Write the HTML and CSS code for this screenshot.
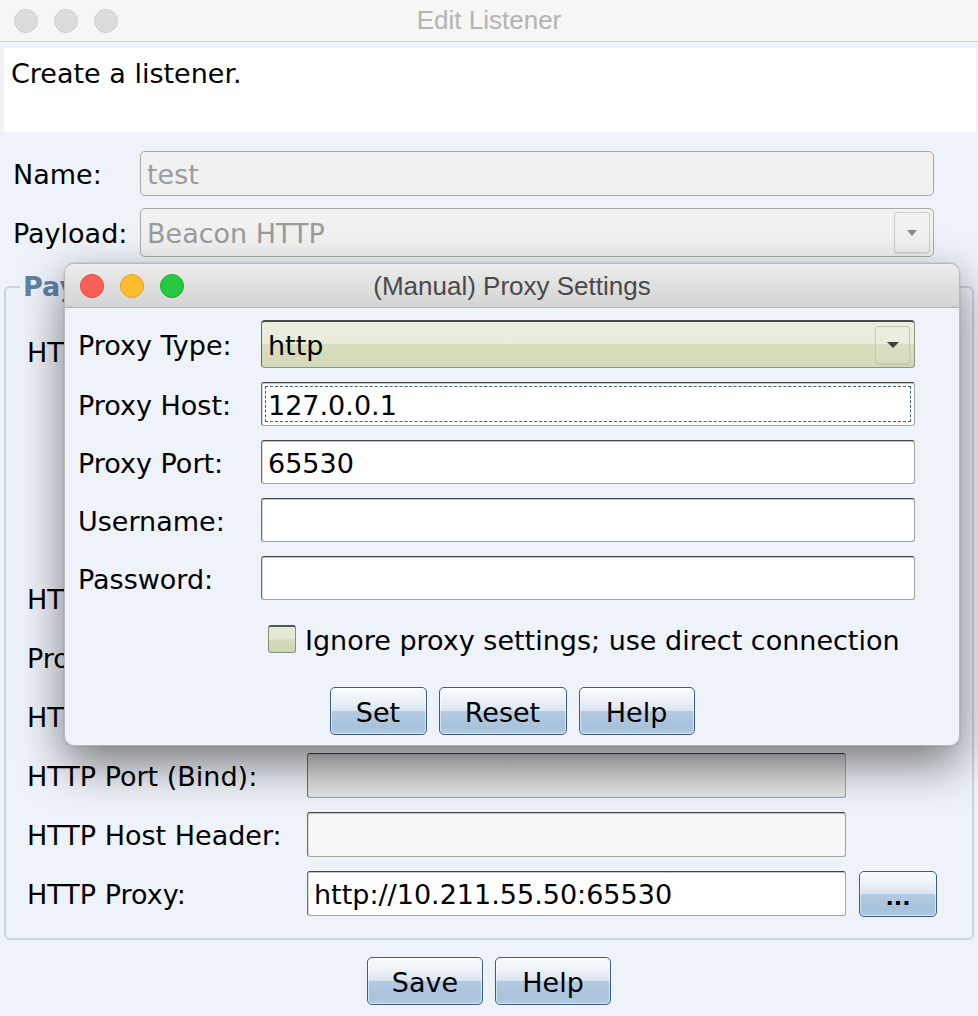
FILE: index.html
```html
<!DOCTYPE html>
<html>
<head>
<meta charset="utf-8">
<title>Edit Listener</title>
<link rel="stylesheet" href="styles.css">
</head>
<body>
<div class="window">
  <div class="titlebar">
    <div class="lights">
      <span class="light off"></span><span class="light off"></span><span class="light off"></span>
    </div>
    <div class="wtitle">Edit Listener</div>
    <div></div>
  </div>

  <div class="desc">Create a listener.</div>

  <div class="form">
    <div class="lbl">Name:</div>
    <div class="field disabled">test</div>
    <div class="lbl">Payload:</div>
    <div class="combo disabled"><span class="val">Beacon HTTP</span><span class="arrow"><span class="tri"></span></span></div>
  </div>

  <div class="group">
    <div class="group-title">Payload Options</div>
    <div class="grid">
      <div class="glbl top">HTTP Hosts:</div>
      <div class="hosts"></div>
      <div></div>
      <div class="glbl">HTTP Host (Stager):</div>
      <div class="field"></div>
      <div></div>
      <div class="glbl">Profile:</div>
      <div class="field"></div>
      <div></div>
      <div class="glbl">HTTP Port (C2):</div>
      <div class="field"></div>
      <div></div>
      <div class="glbl">HTTP Port (Bind):</div>
      <div class="field grey"></div>
      <div></div>
      <div class="glbl">HTTP Host Header:</div>
      <div class="field soft"></div>
      <div></div>
      <div class="glbl">HTTP Proxy:</div>
      <div class="field">http://10.211.55.50:65530</div>
      <button class="btn dots">...</button>
    </div>
  </div>

  <div class="actions">
    <button class="btn">Save</button>
    <button class="btn">Help</button>
  </div>

  <div class="dialog">
    <div class="dtitlebar">
      <div class="lights">
        <span class="light red"></span><span class="light yellow"></span><span class="light green"></span>
      </div>
      <div class="dtitle">(Manual) Proxy Settings</div>
      <div></div>
    </div>
    <div class="dbody">
      <div class="dgrid">
        <div class="dlbl">Proxy Type:</div>
        <div class="combo type"><span class="val">http</span><span class="arrow"><span class="tri"></span></span></div>
        <div class="dlbl">Proxy Host:</div>
        <div class="field focus">127.0.0.1</div>
        <div class="dlbl">Proxy Port:</div>
        <div class="field">65530</div>
        <div class="dlbl">Username:</div>
        <div class="field"></div>
        <div class="dlbl">Password:</div>
        <div class="field"></div>
        <div class="check-row">
          <span class="checkbox"></span>
          <span>Ignore proxy settings; use direct connection</span>
        </div>
      </div>
      <div class="dactions">
        <button class="btn set">Set</button>
        <button class="btn reset">Reset</button>
        <button class="btn help">Help</button>
      </div>
    </div>
  </div>
</div>
</body>
</html>
```

FILE: styles.css
```css
* { box-sizing: border-box; }

html, body {
  margin: 0;
  padding: 0;
  background: #eef2f9;
}

body {
  font-family: "DejaVu Sans", "Noto Sans", sans-serif;
  font-size: 27px;
  color: #000;
}

.window {
  position: relative;
  width: 978px;
  height: 1016px;
  overflow: hidden;
  background: #eef2f9;
}

/* ---------- title bar ---------- */
.titlebar {
  height: 42px;
  display: grid;
  grid-template-columns: 1fr auto 1fr;
  align-items: center;
  background: #f6f6f6;
  border-bottom: 1px solid #d3d3d3;
}

.lights {
  display: flex;
  gap: 16px;
  padding-left: 14px;
}

.light {
  width: 24px;
  height: 24px;
  border-radius: 50%;
  display: block;
}

.light.off { background: #dcdcdc; border: 1px solid #cfcfcf; }
.light.red { background: #fe5f57; border: 1px solid #e2463f; }
.light.yellow { background: #febc2e; border: 1px solid #dea123; }
.light.green { background: #28c840; border: 1px solid #1aab29; }

.wtitle {
  font-family: "Liberation Sans", Arial, sans-serif;
  font-size: 26px;
  color: #b3b3b3;
}

/* ---------- description ---------- */
.desc {
  margin: 6px 2px 0 4px;
  height: 84px;
  background: #fff;
  padding: 10px 7px 0;
  line-height: 32px;
}

/* ---------- top form ---------- */
.form {
  margin: 19px 44px 0 13px;
  display: grid;
  grid-template-columns: 127px 1fr;
  grid-template-rows: 45px 49px;
  row-gap: 12px;
  align-items: center;
}

.lbl, .glbl, .dlbl { white-space: nowrap; padding-top: 2px; }

.field {
  height: 45px;
  display: flex;
  align-items: center;
  padding: 2px 6px 0;
  background: #fff;
  border: 1px solid #a3a3a3;
  border-top-color: #444;
  border-left-color: #6e6e6e;
  border-radius: 3px;
  box-shadow: inset 0 1px 0 #c4c4c4, inset 1px 0 0 #dadada;
  white-space: nowrap;
}

.field.disabled {
  background: #f1f1f1;
  color: #9b9b9b;
  border: 1px solid #a9a9a9;
  border-radius: 5px;
  box-shadow: none;
}

.field.grey {
  background: linear-gradient(#d6d6d6, #e6e6e6);
}

.field.soft {
  background: #f7f7f7;
}

.field.focus {
  outline: 1.5px dashed #3d6182;
  outline-offset: -5px;
}

.combo {
  height: 49px;
  display: flex;
  align-items: center;
  justify-content: space-between;
  padding: 0 3px 0 6px;
  border-radius: 5px;
}

.combo .val { padding-top: 2px; }

.combo.disabled {
  background: #f1f1f1;
  color: #9b9b9b;
  border: 1px solid #a9a9a9;
}

.combo .arrow {
  width: 36px;
  height: 41px;
  display: flex;
  align-items: center;
  justify-content: center;
  border: 1px solid #cdcdcd;
  border-radius: 3px;
  box-shadow: 0 1px 1px rgba(0,0,0,0.08);
}

.combo .tri {
  width: 0;
  height: 0;
  border-left: 5px solid transparent;
  border-right: 5px solid transparent;
  border-top: 6px solid #8a8a8a;
}

.combo.type {
  height: 48px;
  background: linear-gradient(#ebeddf 0%, #e9ecdc 48%, #d7ddbd 50%, #d4dab9 100%);
  border: 1px solid #8e9379;
  border-top: 2px solid #4a4a4a;
  border-left-color: #666;
  border-radius: 4px;
  padding-right: 4px;
}

.combo.type .arrow {
  width: 35px;
  height: 38px;
  border-color: #c6c9b1;
  background: rgba(255,255,255,0.08);
}

.combo.type .tri {
  border-top-color: #3f3f3f;
  border-left-width: 6px;
  border-right-width: 6px;
}

/* ---------- group ---------- */
.group {
  position: relative;
  margin: 29px 4px 0 4px;
  border: 2px solid #c8d5e5;
  border-radius: 6px;
  padding: 40px 35px 22px 21px;
}

.group-title {
  position: absolute;
  top: -17px;
  left: 14px;
  padding: 0 3px;
  line-height: 32px;
  background: #eef2f9;
  color: #5e82a8;
  font-weight: bold;
}

.grid {
  display: grid;
  grid-template-columns: 267px 539px 78px;
  grid-auto-rows: 45px;
  grid-template-rows: 234px;
  column-gap: 13px;
  row-gap: 14px;
  align-items: center;
}

.glbl.top {
  align-self: start;
  line-height: 46px;
}

.hosts {
  align-self: stretch;
  background: #fff;
  border: 1px solid #aaa;
}

/* ---------- buttons ---------- */
.btn {
  font-family: "DejaVu Sans", "Noto Sans", sans-serif;
  font-size: 27px;
  color: #000;
  height: 48px;
  padding: 2px 24px 0;
  border: 1px solid #3c5d7f;
  border-radius: 5px;
  background: linear-gradient(#fbfcfe 0%, #eaf0f7 30%, #dbe5f0 49%, #b4cbe2 51%, #a7c2dd 85%, #b6cce2 100%);
  box-shadow: inset 0 0 0 1px rgba(255,255,255,0.5);
  cursor: default;
}

.btn.dots {
  height: 46px;
  padding: 8px 0 0;
  width: 78px;
  font-weight: bold;
  font-size: 22px;
  line-height: 1;
}

.actions {
  margin-top: 17px;
  display: flex;
  justify-content: center;
  gap: 12px;
}

.actions .btn { width: 116px; padding: 2px 0 0; }

/* ---------- dialog ---------- */
.dialog {
  position: absolute;
  left: 64px;
  top: 263px;
  width: 896px;
  background: #eef2f9;
  border: 1px solid #b9b9b9;
  border-radius: 10px;
  overflow: hidden;
  box-shadow: 0 18px 46px rgba(0,0,0,0.5), 0 0 0 1px rgba(0,0,0,0.06);
}

.dtitlebar {
  height: 44px;
  display: grid;
  grid-template-columns: 1fr auto 1fr;
  align-items: center;
  background: linear-gradient(#ececec, #d4d4d4);
  border-bottom: 1px solid #b1b1b1;
}

.dtitlebar .lights { padding-left: 15px; }

.dtitle {
  font-family: "Liberation Sans", Arial, sans-serif;
  font-size: 26px;
  color: #4a4a4a;
  padding-top: 2px;
}

.dbody {
  padding: 12px 0 10px;
}

.dgrid {
  margin: 0 44px 0 13px;
  display: grid;
  grid-template-columns: 183px 1fr;
  grid-template-rows: 48px 44px 44px 44px 44px auto;
  row-gap: 14px;
  align-items: center;
}

.dgrid .field { height: 44px; }

.check-row {
  grid-column: 2;
  margin-top: 10px;
  height: 30px;
  display: flex;
  align-items: center;
  gap: 9px;
  padding-left: 7px;
  white-space: nowrap;
}

.check-row span:last-child { padding-top: 2px; }

.checkbox {
  width: 28px;
  height: 28px;
  border-radius: 3px;
  border: 1px solid #8a8e79;
  border-top: 2px solid #555;
  background: linear-gradient(#e7e9d9 0%, #e4e7d5 45%, #d3d9b8 55%, #cfd5b3 100%);
}

.dactions {
  margin-top: 33px;
  display: flex;
  justify-content: center;
  gap: 12px;
}

.dactions .set { width: 97px; padding: 2px 0 0; }
.dactions .reset { width: 128px; padding: 2px 0 0; }
.dactions .help { width: 116px; padding: 2px 0 0; }
```
